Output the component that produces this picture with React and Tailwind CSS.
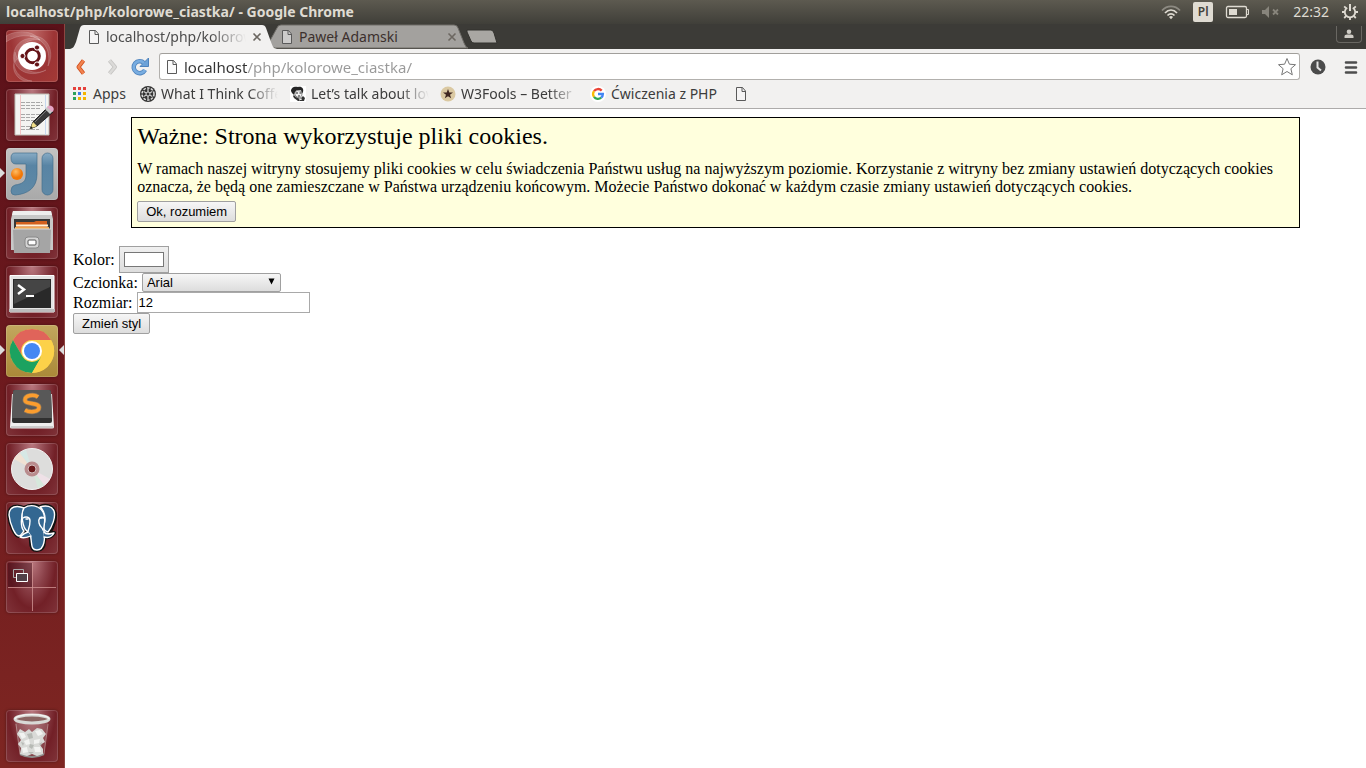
import React from "react";

const UI = "font-['Noto_Sans','Open_Sans',sans-serif]";
const WEB_BUTTON =
  "h-[21px] rounded-[2px] border border-[#a0a0a0] bg-linear-to-b from-[#f6f6f6] to-[#dddddd] font-['Liberation_Sans',Arial,sans-serif] text-[13px] leading-4 text-black";

function PageIcon({ className = "" }) {
  return (
    <svg viewBox="0 0 12 16" className={`h-4 w-3 shrink-0 ${className}`} aria-hidden="true">
      <path d="M1.5 1.5H7.5L10.5 5V14.5H1.5Z" fill="#f8f8f8" fillOpacity="0.5" stroke="#5a5a5a" />
      <path d="M7 1.5V5.5H10.5" fill="none" stroke="#5a5a5a" />
    </svg>
  );
}

function UbuntuIcon() {
  return (
    <svg viewBox="0 0 52 52" className="size-full" aria-hidden="true">
      <g fill="#fff" fillOpacity=".16" stroke="#fff" strokeOpacity=".2" strokeWidth=".8">
        <path d="M8 33C4 14 20 4 34 10C24 8 12 14 12 28Z" />
        <path d="M24 6C40 4 50 20 42 36C45 22 40 10 24 6Z" />
        <path d="M9 22C4 38 22 50 40 40C28 46 14 40 9 22Z" />
        <path d="M0 6C12 -1 28 1 34 10C24 4 12 4 0 12Z" />
        <path d="M8 33C8 42 16 50 26 51H18C10 48 6 40 8 33Z" />
      </g>
      <circle cx="26" cy="26" r="14" fill="#fff" />
      <circle cx="26.500" cy="26" r="6.800" fill="none" stroke="#641317" strokeWidth="3" />
      <g fill="#641317" stroke="#fff" strokeWidth="1">
        <circle cx="16.500" cy="26" r="2.600" />
        <circle cx="31" cy="17.500" r="2.600" />
        <circle cx="31" cy="34.500" r="2.600" />
      </g>
    </svg>
  );
}

function EditorIcon() {
  return (
    <svg viewBox="0 0 52 52" className="size-full" aria-hidden="true">
      <path d="M9 5H43V46H9Z" fill="#f4f4f2" stroke="#bdbdb5" />
      <path d="M14.500 6V46" stroke="#f2c4c4" />
      <path d="M39.500 6V46" stroke="#c7d8ee" />
      <path d="M15 13.500H36M15 16.500H37M15 19.500H35M15 25.500H36M15 28.500H30M15 31.500H29M15 37.500H24M15 40.500H33" stroke="#a8a8a8" strokeDasharray="4 1" />
      <path d="M24 40L27 33L42 18L47 23L31 37Z" fill="#3a3a3a" stroke="#222" />
      <path d="M29 33L42 20" stroke="#777" />
      <path d="M24 40L27 33L31 37Z" fill="#f0df8a" />
      <path d="M24 40L25 37L27 39Z" fill="#222" />
      <path d="M39 20L42 17L47 22L44 25Z" fill="#c8c8c8" />
      <path d="M41 18Q44 15 47 18Q49 21 46 23Z" fill="#e6a6c6" />
    </svg>
  );
}

function IntellijIcon() {
  return (
    <svg viewBox="0 0 52 52" className="size-full" aria-hidden="true">
      <defs>
        <linearGradient id="ij" x1="0" y1="0" x2="0" y2="1">
          <stop offset="0" stopColor="#87abc4" />
          <stop offset=".3" stopColor="#5884a4" />
          <stop offset="1" stopColor="#5f89a6" />
        </linearGradient>
        <radialGradient id="orange" cx=".4" cy=".3">
          <stop offset="0" stopColor="#ffbd63" />
          <stop offset="1" stopColor="#f27807" />
        </radialGradient>
      </defs>
      <path d="M9 5H31V26C31 40 22 46 9 47Q5 47 5 43Q5 38 9 37C17 36 20 33 20 27V16H10Q5 16 5 10Q5 5 9 5Z" fill="url(#ij)" stroke="#45708e" strokeWidth=".7" />
      <rect x="36" y="5" width="11" height="42" rx="5.500" fill="url(#ij)" stroke="#45708e" strokeWidth=".7" />
      <circle cx="11" cy="26" r="6" fill="url(#orange)" />
    </svg>
  );
}

function FilesIcon() {
  return (
    <svg viewBox="0 0 52 52" className="size-full" aria-hidden="true">
      <path d="M7 4H45L47 12V43H5V12Z" fill="#c8c8c8" />
      <path d="M7 4H45L46 8H6Z" fill="#eee" />
      <path d="M8 12H44V24H8Z" fill="#383838" />
      <path d="M10 15H28L30 14H41V22H10Z" fill="#d2601e" />
      <path d="M10 18.500H42" stroke="#fff1d5" strokeWidth="2" />
      <path d="M9 20H43V24H9Z" fill="#f0a852" />
      <path d="M7 22H45L44 46H8Z" fill="#a5a5a5" />
      <path d="M7 22H45" stroke="#d8d8d8" />
      <rect x="19" y="30" width="14" height="11" rx="3" fill="#d5d5d5" stroke="#888" />
      <rect x="22" y="33" width="8" height="5" rx="1" fill="#fff" stroke="#555" />
    </svg>
  );
}

function TerminalIcon() {
  return (
    <svg viewBox="0 0 52 52" className="size-full" aria-hidden="true">
      <path d="M4 9.500H48V46H4Z" fill="#e4e4e4" stroke="#fff" />
      <path d="M3 43H49V46H3Z" fill="#bdbdbd" />
      <path d="M7 13H45V42H7Z" fill="#292929" />
      <path d="M8 14H44V21L8 38Z" fill="#454545" />
      <path d="M12 19L18 23.500L12 28" fill="none" stroke="#fff" strokeWidth="2.500" />
      <path d="M20 30H28" stroke="#fff" strokeWidth="2" />
    </svg>
  );
}

function ChromeIcon() {
  return (
    <svg viewBox="0 0 52 52" className="size-full" aria-hidden="true">
      <circle cx="26" cy="26" r="22" fill="#fcd149" />
      <path d="M6.900 15A22 22 0 0 1 45.100 15H26A11 11 0 0 0 16.500 31.500Z" fill="#e0645a" />
      <path d="M6.900 15A22 22 0 0 0 26 48L35.500 31.500A11 11 0 0 1 16.500 31.500Z" fill="#1ca260" />
      <path d="M26 48L35.500 31.500A11 11 0 0 0 26 15H45.100A22 22 0 0 1 26 48Z" fill="#fcd149" />
      <circle cx="26" cy="26" r="10" fill="#fff" />
      <circle cx="26" cy="26" r="8" fill="#4587f2" />
    </svg>
  );
}

function SublimeIcon() {
  return (
    <svg viewBox="0 0 52 52" className="size-full" aria-hidden="true">
      <path d="M6 10L4 43Q4 44.500 6 44.500H46Q48 44.500 48 43L46 10" fill="#efefef" />
      <path d="M5 43H47" stroke="#aaa" />
      <path d="M9 6H43Q45 6 45 8L46 37Q46 39 44 39H8Q6 39 6 37L7 8Q7 6 9 6Z" fill="#303030" />
      <path d="M9 6H43Q45 6 45 8L46 34H6L7 8Q7 6 9 6Z" fill="#585858" />
      <path d="M32 13C28 10 19 11 19 16C19 21 33 18 33 23.500C33 28 24 29 19 26" fill="none" stroke="#ffb45a" strokeWidth="5" strokeOpacity=".35" />
      <path d="M32 13C28 10 19 11 19 16C19 21 33 18 33 23.500C33 28 24 29 19 26" fill="none" stroke="#fb9d2e" strokeWidth="3.500" />
    </svg>
  );
}

function DiscIcon() {
  return (
    <svg viewBox="0 0 52 52" className="size-full" aria-hidden="true">
      <circle cx="26" cy="26" r="20.500" fill="#dddddc" stroke="#f3f3f3" />
      <path d="M26 26L8 16A20 20 0 0 1 14 10Z" fill="#f0e2d4" />
      <path d="M26 26L14 10A20 20 0 0 1 20 7Z" fill="#d6e8e5" />
      <path d="M26 26L44 36A20 20 0 0 1 38 42Z" fill="#efe1e7" />
      <path d="M26 26L38 42A20 20 0 0 1 32 45Z" fill="#d6e8dc" />
      <circle cx="26" cy="26" r="7.500" fill="#b98b8d" />
      <circle cx="26" cy="26" r="4" fill="#6a191b" stroke="#d4bfc0" />
    </svg>
  );
}

function PostgresIcon() {
  return (
    <svg viewBox="0 0 52 52" className="size-full" strokeLinejoin="round" strokeLinecap="round" aria-hidden="true">
      <path d="M18 6C11 3 3 4 3 13C4 22 9 34 13 34C15 34 16 31 18 30L22 32C24 33 25 35 25 40C25 45 27 48 31 48C36 48 38 45 38 39L39 35C43 36 46 34 48 31L43 31C47 25 51 14 48 9C45 3 38 3 34 5C29 3 23 3 18 6Z" fill="#336791" stroke="#111" strokeWidth="4" />
      <g fill="#336791" stroke="#fff" strokeWidth="1.400">
        <path d="M18 6C11 3 3 4 3 13C4 22 9 34 13 34C15 34 16 31 18 29C14 25 15 14 18 6Z" />
        <path d="M34 5C40 3 46 4 48 9C50 15 46 25 42 30C38 29 37 26 38 22C40 17 39 9 34 5Z" />
        <path d="M18 6C24 2 33 3 37 10C41 17 37 23 38 29C39 35 39 48 31 48C25 48 26 43 25 37C25 33 23 31 21 29C17 26 14 12 18 6Z" />
        <path d="M38 30C40 33 44 32 48 31C46 35 42 36 38 35M22 30C18 31 16 33 14 35C18 37 22 35 25 34" />
        <path d="M17 16C20 14 24 15 24 19C24 24 23 26 22 29M38 16C34 14 32 17 33 21C34 25 36 25 37 28" fill="none" />
      </g>
      <path d="M20 17H22M34 16H36" stroke="#fff" strokeWidth="1.500" />
    </svg>
  );
}

function WorkspaceIcon() {
  return (
    <svg viewBox="0 0 52 52" className="size-full" aria-hidden="true">
      <path d="M2 2H26V26H2Z" fill="#3b0814" fillOpacity=".45" />
      <path d="M26.500 2V50M2 26.500H50" stroke="#cf9292" strokeOpacity=".8" />
      <path d="M7.500 8.500H17.500V16.500H7.500Z" fill="none" stroke="#aaa" />
      <path d="M10.500 12.500H21.500V20.500H10.500Z" fill="#514048" stroke="#fff" />
    </svg>
  );
}

function TrashIcon() {
  return (
    <svg viewBox="0 0 52 52" className="size-full" aria-hidden="true">
      <path d="M9 11L14 45Q26 50 38 45L42 11Z" fill="#c9b5b3" fillOpacity=".2" />
      <path d="M10 14L14 44M42 14L38 44" stroke="#dfd4d1" strokeOpacity=".45" />
      <path d="M14 44Q26 50 38 44" fill="none" stroke="#8d8d8b" strokeWidth="2" />
      <g fill="#d9dad7">
        <path d="M11 24L14 19L19 22L23 19L26 22L31 18L36 19L40 24L37 28L39 32L34 35L37 39L37 44L31 46L26 44L21 46L14 44L15 38L12 34L15 30Z" />
      </g>
      <g fill="#f2f3f1">
        <path d="M13 23L18 23L20 27L16 29Z" />
        <path d="M29 21L34 20L37 24L32 26Z" />
        <path d="M18 31L23 29L24 34L20 35Z" />
        <path d="M28 30L34 29L33 33L28 34Z" />
        <path d="M16 38L21 37L22 42L17 43Z" />
        <path d="M28 37L34 37L35 42L29 42Z" />
      </g>
      <g fill="#b7bab5">
        <path d="M21 24L26 23L27 28L23 29Z" />
        <path d="M15 32L18 33L17 36Z" />
        <path d="M24 34L28 35L26 39L23 37Z" />
        <path d="M33 34L36 32L35 36Z" />
        <path d="M22 42L28 42L25 44Z" />
      </g>
      <ellipse cx="26" cy="9" rx="17" ry="4" fill="#8b6563" stroke="#d8d9d6" strokeWidth="3" />
      <path d="M9 9A17 4.500 0 0 1 43 9" fill="none" stroke="#f5f5f3" strokeWidth="1.200" />
    </svg>
  );
}

const GLASS = "bg-[radial-gradient(ellipse_at_50%_0%,#ba7980_0%,#8b4149_38%,#722027_64%,#80343a_100%)]";

const LAUNCHERS = [
  { name: "Dash", Icon: UbuntuIcon, tile: "bg-[radial-gradient(ellipse_at_50%_0%,#c06a68_0%,#9c3435_60%,#a43a36_100%)]" },
  { name: "Edytor tekstu", Icon: EditorIcon, tile: GLASS },
  { name: "IntelliJ IDEA", Icon: IntellijIcon, tile: "bg-linear-to-b from-[#c3c3c3] to-[#a9a9a9]", running: true },
  { name: "Pliki", Icon: FilesIcon, tile: GLASS },
  { name: "Terminal", Icon: TerminalIcon, tile: GLASS },
  { name: "Google Chrome", Icon: ChromeIcon, tile: "bg-linear-to-b from-[#c2a75e] to-[#aa8938]", running: true, focused: true },
  { name: "Sublime Text", Icon: SublimeIcon, tile: GLASS },
  { name: "Dysk", Icon: DiscIcon, tile: GLASS },
  { name: "pgAdmin", Icon: PostgresIcon, tile: GLASS },
  { name: "Obszary robocze", Icon: WorkspaceIcon, tile: GLASS },
];

function LauncherButton({ name, Icon, tile, running, focused }) {
  return (
    <div className="relative flex w-full justify-center pr-px">
      {running && (
        <span className="absolute left-0 top-5 border-y-[5px] border-l-[5px] border-y-transparent border-l-[#dcdcdc]" />
      )}
      <button
        type="button"
        aria-label={name}
        className={`size-[52px] overflow-hidden rounded-[4px] shadow-[inset_0_0_0_1px_rgba(255,255,255,0.15),0_0_3px_rgba(0,0,0,0.35)] ${tile}`}
      >
        <Icon />
      </button>
      {focused && (
        <span className="absolute right-0 top-5 border-y-[5px] border-r-[5px] border-y-transparent border-r-[#dcdcdc]" />
      )}
    </div>
  );
}

function Launcher() {
  return (
    <nav
      aria-label="Launcher"
      className="flex w-[65px] shrink-0 flex-col gap-[7px] border-r border-[#8d4541] bg-linear-to-b from-[#5b1119] via-[#6e1a1e] to-[#7e2622] py-1.5"
    >
      {LAUNCHERS.map((item) => (
        <LauncherButton key={item.name} {...item} />
      ))}
      <div className="mt-auto w-full">
        <LauncherButton name="Kosz" Icon={TrashIcon} tile={GLASS} />
      </div>
    </nav>
  );
}

function SystemBar() {
  return (
    <header
      className={`flex h-6 shrink-0 items-center justify-between bg-linear-to-b from-[#5d5a50] to-[#403f39] pl-1.5 pr-[7px] text-[#dfdbd2] ${UI}`}
    >
      <h1 className="text-sm leading-5 font-bold">localhost/php/kolorowe_ciastka/ - Google Chrome</h1>
      <div className="flex items-center">
        <svg viewBox="0 0 20 16" className="h-4 w-5" fill="none" strokeWidth="1.700" role="img" aria-label="Wi-Fi">
          <path d="M1 6.500C6 1 14 1 19 6.500" stroke="#8d8a82" />
          <path d="M4 9C7.500 5 12.500 5 16 9" stroke="#dfdbd2" />
          <path d="M6.500 11.500C8.500 9.300 11.500 9.300 13.500 11.500" stroke="#dfdbd2" />
          <path d="M8 13Q10 11 12 13L10 15.300Z" fill="#dfdbd2" />
        </svg>
        <span className="ml-3 flex h-5 w-5 items-center justify-center rounded-[2px] bg-[#dfdbd2] text-xs font-semibold text-[#45433c]">
          Pl
        </span>
        <svg viewBox="0 0 24 14" className="ml-3 h-3.5 w-6" role="img" aria-label="Bateria">
          <rect x="1.500" y="1.500" width="20" height="11" rx="1.500" fill="none" stroke="#dfdbd2" strokeWidth="1.300" />
          <path d="M4 4H12V10H4Z" fill="#dfdbd2" />
          <path d="M22 4.500H23.500V9.500H22" fill="none" stroke="#dfdbd2" />
        </svg>
        <svg viewBox="0 0 20 14" className="ml-3 h-3.5 w-5" role="img" aria-label="Dźwięk wyciszony">
          <path d="M1 5H4L8 1V13L4 9H1Z" fill="#88857c" />
          <path d="M12 4.500L17 9.500M17 4.500L12 9.500" stroke="#88857c" strokeWidth="1.800" />
        </svg>
        <time className="ml-3 text-sm leading-5">22:32</time>
        <svg viewBox="0 0 18 18" className="ml-3 size-[18px]" fill="none" stroke="#dfdbd2" role="img" aria-label="System">
          <path d="M6.200 4.800A5.200 5.200 0 1 0 11.800 4.800" strokeWidth="1.800" />
          <path d="M9 1V8" strokeWidth="2" />
          <path d="M5 5.200L3.200 3.400M13 5.200L14.800 3.400M3.500 9H1M14.500 9H17M5 13.200L3.200 15M13 13.200L14.800 15M9 15V17" strokeWidth="1.800" />
        </svg>
      </div>
    </header>
  );
}

function CloseIcon() {
  return (
    <svg viewBox="0 0 10 10" className="size-2.5" aria-hidden="true">
      <path d="M1.500 1.500L8.500 8.500M8.500 1.500L1.500 8.500" stroke="#6c6761" strokeWidth="1.600" />
    </svg>
  );
}

function Tab({ title, active }) {
  return (
    <div className={`relative flex h-[25px] w-[207px] items-center ${active ? "z-10" : "-ml-2.5"}`}>
      <svg viewBox="0 0 207 25" preserveAspectRatio="none" className="absolute inset-0 size-full" aria-hidden="true">
        <path
          d={active ? "M0 25C4 24 4 22 6 18L10 4Q11 1 14 1H192Q195 1 196 4L201 18C203 23 203 24 207 25Z" : "M0 22L10 4Q11 1 14 1H187Q190 1 191 4L197 19Q199 24 201 24H8Z"}
          fill={active ? "#f2f1f0" : "#a3a19e"}
          stroke={active ? "none" : "#706e69"}
          strokeWidth="1"
        />
      </svg>
      <PageIcon className={`relative ${active ? "ml-[18px]" : "ml-[14px]"}`} />
      <a
        href="#tab"
        className={`relative ml-1.5 overflow-hidden whitespace-nowrap text-sm leading-5 ${
          active ? "w-[140px] text-[#4c4c4c] mask-[linear-gradient(90deg,#000_75%,transparent)]" : "w-[142px] text-[#3c302d]"
        }`}
      >
        {title}
      </a>
      <button type="button" aria-label={`Zamknij ${title}`} className="relative ml-1.5">
        <CloseIcon />
      </button>
    </div>
  );
}

function TabStrip() {
  return (
    <div className={`flex h-[25px] shrink-0 items-start bg-[#3c3b37] pl-[5px] pr-1 ${UI}`}>
      <Tab title="localhost/php/kolorowe_ciastka/" active />
      <Tab title="Paweł Adamski" />
      <button type="button" aria-label="Nowa karta" className="-ml-2 mt-[5px]">
        <svg viewBox="0 0 32 16" className="h-4 w-8" aria-hidden="true">
          <path d="M1 1H25Q27 1 28 4L31 14H8Q6 14 5 12L1 3Z" fill="#a9a7a3" stroke="#33322e" />
        </svg>
      </button>
      <button
        type="button"
        aria-label="Profil"
        className="ml-auto mt-0.5 flex h-[17px] w-[26px] items-center justify-center rounded-b-[4px] border border-t-0 border-[#696762]"
      >
        <svg viewBox="0 0 10 10" className="size-2.5" fill="#cfccc5" aria-hidden="true">
          <circle cx="5" cy="2.800" r="2.300" />
          <path d="M.5 9V7Q.5 5.500 3 5.500H7Q9.500 5.500 9.500 7V9Z" />
        </svg>
      </button>
    </div>
  );
}

function AddressBar() {
  return (
    <div className={`flex h-[31px] shrink-0 items-center bg-[#f2f1f0] pl-2 pr-[7px] pt-1 ${UI}`}>
      <button type="button" aria-label="Wstecz">
        <svg viewBox="0 0 16 20" className="h-5 w-4" fill="none" aria-hidden="true">
          <path d="M10.500 3.500L5.500 10L10.500 16.500" stroke="#cf4d1c" strokeWidth="4" strokeLinejoin="round" />
          <path d="M10.500 3.500L5.500 10L10.500 16.500" stroke="#f2834f" strokeWidth="2.400" strokeLinejoin="round" />
        </svg>
      </button>
      <button type="button" aria-label="Dalej" className="ml-4">
        <svg viewBox="0 0 16 20" className="h-5 w-4" fill="none" aria-hidden="true">
          <path d="M4.500 3.500L10 10L4.500 16.500" stroke="#c4c3c1" strokeWidth="4" strokeLinejoin="round" />
          <path d="M4.500 3.500L10 10L4.500 16.500" stroke="#dbdad8" strokeWidth="2.400" strokeLinejoin="round" />
        </svg>
      </button>
      <button type="button" aria-label="Odśwież" className="ml-2.5">
        <svg viewBox="0 0 18 20" className="h-5 w-[18px]" fill="none" aria-hidden="true">
          <path d="M14 13A6 6 0 1 1 13 6" stroke="#4e83bd" strokeWidth="4.500" />
          <path d="M17.500 1V9.500H9Z" fill="#6ca2d8" stroke="#4e83bd" />
          <path d="M14 13A6 6 0 1 1 13 6" stroke="#79ade0" strokeWidth="2.800" />
        </svg>
      </button>
      <div className="ml-2.5 flex h-[27px] min-w-0 flex-1 items-center rounded-[3px] border border-[#b2b0ad] border-t-[#a19f9b] bg-white pl-1.5 pr-0.5">
        <PageIcon />
        <input
          type="text"
          aria-label="Adres"
          defaultValue="localhost/php/kolorowe_ciastka/"
          className="ml-1.5 min-w-0 flex-1 bg-[linear-gradient(90deg,#333333_64px,#999999_64px)] bg-clip-text text-[15px] leading-5 text-transparent outline-none"
        />
        <button type="button" aria-label="Dodaj zakładkę">
          <svg viewBox="0 0 20 20" className="size-5" aria-hidden="true">
            <path d="M10 1.500L12.400 7.200L18.500 7.700L13.900 11.700L15.300 17.800L10 14.500L4.700 17.800L6.100 11.700L1.500 7.700L7.600 7.200Z" fill="#fff" stroke="#777" strokeLinejoin="round" />
          </svg>
        </button>
      </div>
      <button type="button" aria-label="Historia" className="ml-2.5">
        <svg viewBox="0 0 16 16" className="size-4" aria-hidden="true">
          <circle cx="8" cy="8" r="7.500" fill="#4b4b4b" />
          <path d="M7.500 2.500V8.500L11 11.500" fill="none" stroke="#e4e4e4" strokeWidth="2" />
        </svg>
      </button>
      <button type="button" aria-label="Menu" className="ml-[17px]">
        <svg viewBox="0 0 16 16" className="size-4" aria-hidden="true">
          <path d="M3 3.500H13M3 8.500H13M3 13.500H13" stroke="#4d4d4d" strokeWidth="2.600" strokeLinecap="round" />
        </svg>
      </button>
    </div>
  );
}

function AppsIcon() {
  return (
    <svg viewBox="0 0 14 14" className="size-3.5" aria-hidden="true">
      <path d="M0 0H3V3H0ZM5 0H8V3H5ZM10 0H13V3H10Z" fill="#e5413b" />
      <path d="M0 5H3V8H0Z" fill="#2da159" />
      <path d="M5 5H8V8H5Z" fill="#3f7be5" />
      <path d="M10 5H13V8H10ZM5 10H8V13H5ZM10 10H13V13H10Z" fill="#f4b400" />
      <path d="M0 10H3V13H0Z" fill="#2da159" />
    </svg>
  );
}

function WheelIcon() {
  return (
    <svg viewBox="0 0 16 16" className="size-4 shrink-0" aria-hidden="true">
      <circle cx="8" cy="8" r="8" fill="#333" />
      <circle cx="8" cy="8" r="6" fill="none" stroke="#ddd" strokeWidth="1.500" strokeDasharray="2.500 1.300" />
      <path d="M8 3V13M3.700 5.500L12.300 10.500M12.300 5.500L3.700 10.500" stroke="#ccc" strokeWidth="1.300" />
      <circle cx="8" cy="8" r="2" fill="#333" stroke="#eee" strokeWidth=".8" />
    </svg>
  );
}

function FaceIcon() {
  return (
    <svg viewBox="0 0 16 16" className="size-4 shrink-0" aria-hidden="true">
      <path d="M0 0H16V16H0Z" fill="#fff" />
      <path d="M1 5C1 1 5 0 8 1C12 0 14 3 13 6L12 8L11 4L7 4L5 6L4 9L2 7Z" fill="#252525" />
      <path d="M5 6L7 4.500L11 5L12 9L10 12L7 11L5 9Z" fill="#f1f1f1" stroke="#444" strokeWidth=".6" />
      <path d="M6 7H8M9.500 7H11M8 10H10" stroke="#222" />
      <path d="M4 9L6 11L10 13L13 10L15 12L14 15H8L4 12L3 10Z" fill="#333" />
      <path d="M9 14L12 13" stroke="#eee" />
    </svg>
  );
}

function StarBadgeIcon() {
  return (
    <svg viewBox="0 0 16 16" className="size-4 shrink-0" aria-hidden="true">
      <circle cx="8" cy="8" r="7.500" fill="#dbc9a2" />
      <path d="M8 3L9.300 6.500H13L10 8.700L11.200 12.300L8 10.200L4.800 12.300L6 8.700L3 6.500H6.700Z" fill="#402721" />
    </svg>
  );
}

function GoogleIcon() {
  return (
    <svg viewBox="0 0 16 16" className="size-4 shrink-0" aria-hidden="true">
      <circle cx="8" cy="8" r="8" fill="#fff" />
      <g fill="none" strokeWidth="2.300">
        <path d="M4 5.200A4.900 4.900 0 0 1 11.700 4.600" stroke="#ea4335" />
        <path d="M4 5.200A4.900 4.900 0 0 0 4 10.800" stroke="#fbbc05" />
        <path d="M4 10.800A4.900 4.900 0 0 0 11.200 11.700" stroke="#34a853" />
        <path d="M11.200 11.700A4.900 4.900 0 0 0 12.900 8H8" stroke="#4285f4" />
      </g>
    </svg>
  );
}

const BOOKMARKS = [
  { title: "Apps", icon: <AppsIcon />, place: "w-[67px] gap-1.5" },
  { title: "What I Think Coffee", icon: <WheelIcon />, place: "w-[150px] gap-[5px]", clip: "w-[117px]" },
  { title: "Let’s talk about love", icon: <FaceIcon />, place: "w-[150px] gap-[5px]", clip: "w-[118px]" },
  { title: "W3Fools – Better", icon: <StarBadgeIcon />, place: "w-[150px] gap-[5px]", clip: "w-[117px]" },
  { title: "Ćwiczenia z PHP", icon: <GoogleIcon />, place: "w-[145px] gap-[5px]" },
];

function BookmarksBar() {
  return (
    <nav
      aria-label="Zakładki"
      className={`flex h-[29px] shrink-0 items-center border-b border-[#adabaa] bg-[#f2f1f0] pl-2 text-[#3c3c3c] ${UI}`}
    >
      {BOOKMARKS.map(({ title, icon, place, clip }) => (
        <a key={title} href="#bookmark" className={`flex shrink-0 items-center whitespace-nowrap text-sm leading-5 ${place}`}>
          {icon}
          <span className={clip ? `overflow-hidden mask-[linear-gradient(90deg,#000_75%,transparent)] ${clip}` : ""}>
            {title}
          </span>
        </a>
      ))}
      <a href="#bookmark" aria-label="Zakładka bez nazwy">
        <PageIcon />
      </a>
    </nav>
  );
}

function CookieNotice() {
  return (
    <section className="mx-auto box-content w-[90%] border border-black bg-[#ffffdd] p-[5px]">
      <h2 className="text-2xl leading-[27px]">Ważne: Strona wykorzystuje pliki cookies.</h2>
      <p className="mt-2.5 text-base leading-[18px]">
        W ramach naszej witryny stosujemy pliki cookies w celu świadczenia Państwu usług na najwyższym poziomie.
        Korzystanie z witryny bez zmiany ustawień dotyczących cookies oznacza, że będą one zamieszczane w Państwa
        urządzeniu końcowym. Możecie Państwo dokonać w każdym czasie zmiany ustawień dotyczących cookies.
      </p>
      <button type="button" className={`mt-[5px] block px-2 ${WEB_BUTTON}`}>
        Ok, rozumiem
      </button>
    </section>
  );
}

function StyleForm() {
  return (
    <form className="mt-[18px] text-base leading-[18px]" onSubmit={(e) => e.preventDefault()}>
      <div className="flex items-center gap-1">
        <label htmlFor="color">Kolor:</label>
        <input
          id="color"
          type="color"
          defaultValue="#ffffff"
          className="h-[27px] w-[50px] appearance-none border border-[#a0a0a0] bg-linear-to-b from-[#f0f0f0] to-[#dddddd] px-1 py-[5px] [&::-webkit-color-swatch]:rounded-none [&::-webkit-color-swatch]:border-[#777777] [&::-webkit-color-swatch-wrapper]:p-0"
        />
      </div>
      <div className="flex items-center gap-1">
        <label htmlFor="font">Czcionka:</label>
        <div className="relative flex">
          <select
            id="font"
            defaultValue="Arial"
            className={`w-[139px] appearance-none pl-1 pr-4 ${WEB_BUTTON} h-[19px]!`}
          >
            <option>Arial</option>
            <option>Verdana</option>
            <option>Times New Roman</option>
          </select>
          <svg viewBox="0 0 7 7" className="pointer-events-none absolute right-1.5 top-[5px] size-[7px]" aria-hidden="true">
            <path d="M0.500 0.500H6.500L3.500 6.500Z" />
          </svg>
        </div>
      </div>
      <div className="flex items-center gap-1">
        <label htmlFor="size">Rozmiar:</label>
        <input
          id="size"
          type="text"
          inputMode="numeric"
          defaultValue="12"
          className="h-[21px] w-[173px] border border-[#a9a9a9] bg-white px-px font-['Liberation_Sans',Arial,sans-serif] text-[13px]"
        />
      </div>
      <button type="submit" className={`block px-2 ${WEB_BUTTON}`}>
        Zmień styl
      </button>
    </form>
  );
}

export default function App() {
  return (
    <div className="flex h-screen flex-col overflow-hidden bg-white">
      <SystemBar />
      <div className="flex min-h-0 flex-1">
        <Launcher />
        <div className="flex min-w-0 flex-1 flex-col">
          <TabStrip />
          <AddressBar />
          <BookmarksBar />
          <main className="flex-1 overflow-auto bg-white p-2 font-['Liberation_Serif','Times_New_Roman',serif] text-black">
            <CookieNotice />
            <StyleForm />
          </main>
        </div>
      </div>
    </div>
  );
}
